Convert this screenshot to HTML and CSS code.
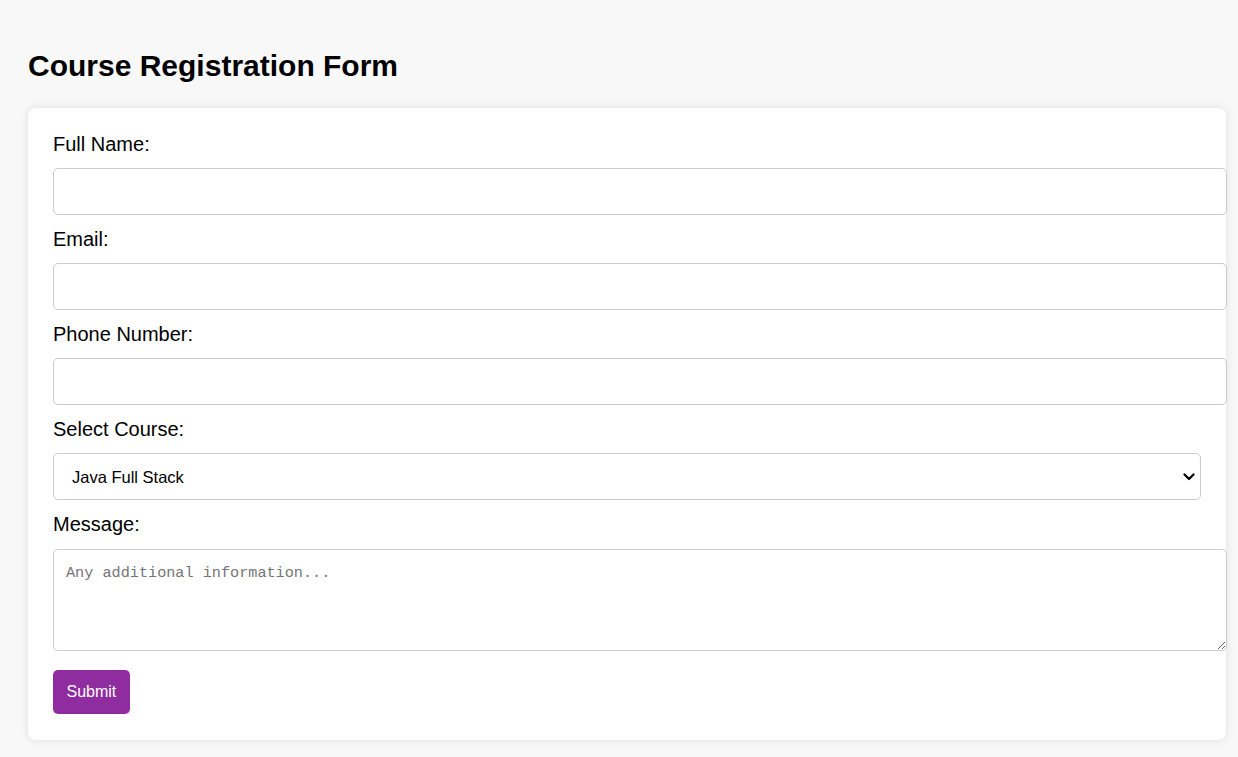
FILE: index.html
```html
<!DOCTYPE html>
<html lang="en">
<head>
<meta charset="utf-8">
<title>Course Registration Form</title>
<link rel="stylesheet" href="styles.css">
</head>
<body>
<div class="page">
  <h1 class="title">Course Registration Form</h1>
  <form class="card">
    <label class="label" for="name">Full Name:</label>
    <input class="field" type="text" id="name">
    <label class="label" for="email">Email:</label>
    <input class="field" type="email" id="email">
    <label class="label" for="phone">Phone Number:</label>
    <input class="field" type="tel" id="phone">
    <label class="label" for="course">Select Course:</label>
    <div class="select-wrap">
      <select class="select" id="course">
        <option>Java Full Stack</option>
        <option>Python Full Stack</option>
        <option>MERN Stack</option>
      </select>
      <svg class="chevron" width="12" height="8" viewBox="0 0 12 8"><path d="M1.5 1.5 L6 6 L10.5 1.5" fill="none" stroke="#000" stroke-width="2.2" stroke-linecap="round" stroke-linejoin="round"/></svg>
    </div>
    <label class="label" for="msg">Message:</label>
    <textarea class="area" id="msg" placeholder="Any additional information..."></textarea>
    <div class="actions">
      <button class="submit" type="submit">Submit</button>
    </div>
  </form>
</div>
</body>
</html>
```

FILE: styles.css
```css
html, body {
  margin: 0;
  padding: 0;
  background: #f8f8f8;
}
body {
  font-family: "Liberation Sans", Arial, sans-serif;
  color: #000;
}
.page {
  padding: 28px 12px 17px 28px;
}
.title {
  font-size: 30px;
  font-weight: bold;
  line-height: 37px;
  margin: 19px 0 24px;
}
.card {
  display: flex;
  flex-direction: column;
  align-items: flex-start;
  background: #fff;
  border-radius: 8px;
  box-shadow: 0 0 10px rgba(0, 0, 0, 0.1);
  padding: 25px 25px 26px;
}
.label {
  display: block;
  font-size: 20px;
  line-height: 23px;
}
.field {
  box-sizing: content-box;
  width: 100%;
  height: 21px;
  padding: 12px;
  margin: 12px 0 13px;
  border: 1px solid #ccc;
  border-radius: 5px;
  font-family: "Liberation Sans", Arial, sans-serif;
  font-size: 16px;
  background: #fff;
  outline: none;
}
.select-wrap {
  position: relative;
  width: 100%;
  margin: 12px 0 13px;
}
.select {
  display: block;
  box-sizing: border-box;
  width: 100%;
  height: 47px;
  padding: 0 18px;
  border: 1px solid #ccc;
  border-radius: 5px;
  font-family: "Liberation Sans", Arial, sans-serif;
  font-size: 16.5px;
  color: #000;
  background: #fff;
  appearance: none;
  -webkit-appearance: none;
  outline: none;
}
.chevron {
  position: absolute;
  right: 6px;
  top: 20px;
  pointer-events: none;
}
.area {
  box-sizing: content-box;
  width: 100%;
  height: 76px;
  padding: 12px;
  margin: 13px 0 0;
  border: 1px solid #ccc;
  border-radius: 5px;
  font-family: "Liberation Mono", "DejaVu Sans Mono", monospace;
  font-size: 15.2px;
  line-height: 22px;
  resize: vertical;
  outline: none;
}
.area::placeholder {
  color: #757575;
}
.actions {
  margin-top: 19px;
}
.submit {
  display: block;
  height: 44px;
  padding: 0 13.5px;
  border: none;
  border-radius: 5px;
  background: #8e2ca0;
  color: #fff;
  font-family: "Liberation Sans", Arial, sans-serif;
  font-size: 16px;
  cursor: pointer;
}
```
